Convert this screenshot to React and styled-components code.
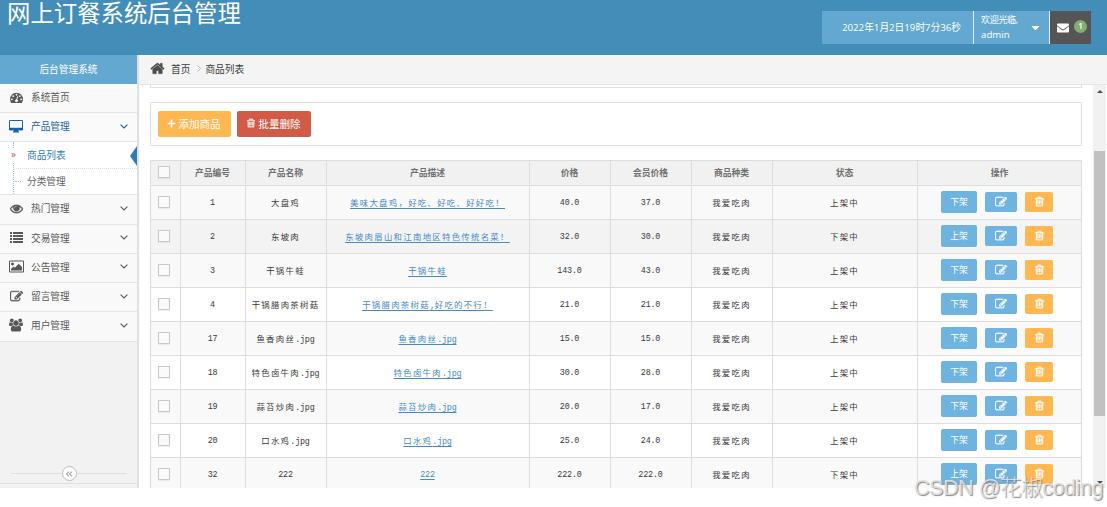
import React, { Fragment } from "react";
import styled, { createGlobalStyle, css } from "styled-components";
import {
  FaAngleDoubleLeft,
  FaCaretDown,
  FaEnvelope,
  FaPlus,
} from "react-icons/fa";

const GlobalStyle = createGlobalStyle`
  * {
    box-sizing: border-box;
  }
  body {
    margin: 0;
    background: #fff;
    color: #393939;
    font-family: "Open Sans", "Noto Sans CJK SC", sans-serif;
    font-size: 9.7px;
    overflow: hidden;
  }
`;

const Page = styled.div`
  position: relative;
  width: 1107px;
  height: 507px;
  overflow: hidden;
`;

const Navbar = styled.header`
  display: flex;
  justify-content: space-between;
  height: 55px;
  padding: 0 16px 0 7px;
  background: #438eb9;
  color: #fff;
`;

const Brand = styled.h1`
  margin: 0;
  font-size: 23.4px;
  font-weight: 400;
  line-height: 26px;
  white-space: nowrap;
`;

const NavTools = styled.div`
  display: flex;
  height: 33px;
  margin-top: 11px;
`;

const Clock = styled.div`
  width: 152px;
  padding-left: 20px;
  background: #62a8d1;
  border-right: 1px solid #e1eef6;
  line-height: 33px;
  white-space: nowrap;
`;

const UserMenu = styled.div`
  display: flex;
  align-items: center;
  justify-content: space-between;
  width: 76px;
  padding: 0 7px 0 7px;
  background: #62a8d1;
  border-right: 1px solid #e1eef6;
`;

const UserInfo = styled.div`
  margin-top: -1px;
  font-size: 9.7px;
  line-height: 15px;
  white-space: nowrap;

  small {
    display: block;
    font-size: 9px;
    letter-spacing: -0.3px;
  }
`;

const Messages = styled.div`
  display: flex;
  align-items: center;
  gap: 5px;
  width: 41px;
  padding-left: 7px;
  background: #555;
`;

const Badge = styled.span`
  width: 13px;
  height: 13px;
  margin-top: -3px;
  border-radius: 50%;
  background: #82af6f;
  font-size: 9px;
  font-weight: 600;
  line-height: 12px;
  text-align: center;
`;

const Main = styled.div`
  display: flex;
  height: 433px;
`;

const Sidebar = styled.aside`
  display: flex;
  flex-direction: column;
  width: 139px;
  background: #f2f2f2;
  border-right: 2px solid #e0e0e0;
`;

const SidebarTitle = styled.div`
  height: 29px;
  background: #62a8d1;
  color: #fff;
  line-height: 29px;
  text-align: center;
`;

const MenuItem = styled.div`
  display: flex;
  align-items: center;
  height: ${(props) => props.$height || 29.25}px;
  padding: 0 9px 2px 8px;
  background: ${(props) => (props.$open ? "#fafafa" : "#f9f9f9")};
  border-bottom: 1px solid #e5e5e5;
  color: ${(props) => (props.$open ? "#1963aa" : "#585858")};
`;

const MenuIcon = styled.span`
  display: flex;
  justify-content: center;
  width: 16px;
  margin-right: 7px;
`;

const MenuLabel = styled.span`
  flex: 1;
`;

const SubMenu = styled.div`
  height: 53.3px;
  padding-left: 13px;
  background: #fff;
  border-bottom: 1px solid #e5e5e5;
`;

const SubList = styled.div`
  border-left: 1px dotted #9dbdd6;
`;

const SubItem = styled.div`
  position: relative;
  display: flex;
  align-items: center;
  height: 26px;
  padding: 0 0 1px 13px;
  color: ${(props) => (props.$active ? "#2b7dbc" : "#616161")};

  & + & {
    border-top: 1px dotted #e0e0e0;
  }

  &::before {
    content: "${(props) => (props.$active ? "»" : "")}";
    position: absolute;
    left: ${(props) => (props.$active ? "-3px" : "1px")};
    top: ${(props) => (props.$active ? "6px" : "12px")};
    width: 6px;
    color: #c86139;
    font-size: 10px;
    line-height: 12px;
    ${(props) =>
      props.$active
        ? "background: #fff; height: 14px;"
        : "height: 1px; border-top: 1px dotted #9dbdd6;"}
  }
`;

const ActiveArrow = styled.span`
  position: absolute;
  right: 0;
  top: 4px;
  border-style: solid;
  border-width: 10px 7px 10px 0;
  border-color: transparent #2b7dbc;
`;

const Collapse = styled.div`
  display: flex;
  align-items: center;
  height: 20px;
  margin-top: auto;
  margin-bottom: 4px;
  padding: 0 10px 0 11px;
  border-bottom: 1px solid #e0e0e0;

  &::before,
  &::after {
    content: "";
    flex: 1;
    height: 1px;
    background: #e0e0e0;
  }
`;

const CollapseButton = styled.span`
  display: flex;
  align-items: center;
  justify-content: center;
  width: 15px;
  height: 15px;
  border: 1px solid #bbb;
  border-radius: 50%;
  background: #fff;
  color: #aaa;
`;

const Content = styled.main`
  flex: 1;
  display: flex;
  flex-direction: column;
  min-width: 0;
`;

const Breadcrumbs = styled.nav`
  display: flex;
  align-items: center;
  height: 30px;
  padding: 0 0 2px 11px;
  background: #f4f4f4;
  border-bottom: 1px solid #e5e5e5;

  & > svg:first-child {
    color: #4c4c4c;
  }
`;

const Crumb = styled.span`
  margin-left: ${(props) => props.$gap}px;
`;

const ScrollArea = styled.div`
  flex: 1;
  display: flex;
  min-height: 0;
`;

const Body = styled.div`
  width: 954px;
  padding: 0 11px;
  overflow: hidden;
`;

const SearchBottom = styled.div`
  height: 3px;
  border: 1px solid #e0e0e0;
  border-top: 0;
`;

const Toolbar = styled.div`
  display: flex;
  gap: 6px;
  height: 44px;
  margin: 14px 0;
  padding: 8px 7px;
  border: 1px solid #e0e0e0;
`;

const ToolButton = styled.button`
  display: flex;
  align-items: center;
  justify-content: center;
  gap: 2px;
  width: ${(props) => props.$width}px;
  height: 26px;
  padding: 0 1px 2px 0;
  border: 0;
  border-radius: 2px;
  background: ${(props) => props.$color};
  color: #fff;
  font-family: inherit;
  font-size: 10.6px;
`;

const Row = styled.div`
  display: grid;
  grid-template-columns: 30px 65px 81px 203px 81px 81px 81px 145px 165px;
  height: 34px;
  background: ${(props) => props.$background};
  border-bottom: 1px solid #ddd;
  border-right: 1px solid #ddd;
  font-family: "Liberation Mono", "Noto Sans CJK SC", monospace;
  font-size: 8.4px;

  ${(props) =>
    props.$head &&
    css`
      height: 26px;
      padding-bottom: 1px;
      border-top: 1px solid #ddd;
      color: #707070;
      font-size: 8.8px;
      font-weight: 700;
    `}
`;

const Cell = styled.div`
  display: flex;
  align-items: center;
  justify-content: center;
  padding-right: 1px;
  border-left: 1px solid #ddd;
  white-space: nowrap;
`;

const CheckCell = styled(Cell)`
  justify-content: flex-start;
  padding: 0 0 1px 7px;
`;

const Checkbox = styled.span`
  width: 12px;
  height: 12px;
  border: 1px solid #c8c8c8;
  background: #fafafa;
  box-shadow: 0 1px 1px rgba(0, 0, 0, 0.05);
`;

const Han = styled.span`
  letter-spacing: 1.3px;
`;

const Latin = styled.span`
  letter-spacing: -0.17px;
`;

const Link = styled.a`
  color: #428bca;
  text-decoration: underline;
  text-decoration-thickness: 1px;
  text-underline-offset: 1.5px;
`;

const Actions = styled(Cell)`
  gap: 8px;
  justify-content: flex-start;
  padding: 0 0 1px 23px;
`;

const ActionButton = styled.button`
  display: flex;
  align-items: center;
  justify-content: center;
  width: ${(props) => props.$width}px;
  height: ${(props) => props.$height || 20}px;
  padding: 0 0 1px;
  border: 0;
  border-radius: 2px;
  background: ${(props) => (props.$warning ? "#ffb752" : "#6fb3e0")};
  color: #fff;
  font-family: "Noto Sans CJK SC", sans-serif;
  font-size: 8.8px;
`;

const Scrollbar = styled.div`
  display: flex;
  flex-direction: column;
  align-items: center;
  justify-content: space-between;
  width: 13px;
  padding: 5px 0 4px;
  background: #f1f1f1;
`;

const Thumb = styled.div`
  width: 11px;
  height: 265px;
  margin: 58px 0 auto;
  background: #c1c1c1;
`;

const ScrollArrow = styled.span`
  border: 3px solid transparent;
  ${(props) =>
    props.$up
      ? "border-top: 0; border-bottom-color: #505050;"
      : "border-bottom: 0; border-top-color: #505050;"}
`;

const Watermark = styled.div`
  position: absolute;
  left: 914px;
  top: 475px;
  color: rgba(225, 225, 225, 0.9);
  font-family: "Liberation Sans", "Noto Sans CJK SC", sans-serif;
  font-size: 21.6px;
  font-weight: 300;
  letter-spacing: -0.5px;
  line-height: 26px;
  text-shadow: 1px 1px 1px #888;
  white-space: nowrap;
`;

const Glyph = ({ width = 11, viewBox = "0 0 1792 1792", weight = 0, d }) => (
  <svg
    width={width}
    height={width}
    viewBox={viewBox}
    fill="currentColor"
    stroke="currentColor"
    strokeWidth={weight}
  >
    <path d={d} />
  </svg>
);

const HomeIcon = () => (
  <Glyph
    width={15}
    weight={40}
    d="M1472 992v480q0 26-19 45t-45 19h-384v-384h-256v384h-384q-26 0-45-19t-19-45v-480q0-1 .5-3t.5-3l575-474 575 474q1 2 1 6zm223-69l-62 74q-8 9-21 11h-3q-13 0-21-7l-692-577-692 577q-12 8-24 7-13-2-21-11l-62-74q-8-10-7-23.5t11-21.5l719-599q32-26 76-26t76 26l244 204v-195q0-14 9-23t23-9h192q14 0 23 9t9 23v408l219 182q10 8 11 21.5t-7 23.5z"
  />
);

const TrashIcon = ({ width }) => (
  <Glyph
    width={width}
    weight={50}
    d="M704 736v576q0 14-9 23t-23 9h-64q-14 0-23-9t-9-23v-576q0-14 9-23t23-9h64q14 0 23 9t9 23zm256 0v576q0 14-9 23t-23 9h-64q-14 0-23-9t-9-23v-576q0-14 9-23t23-9h64q14 0 23 9t9 23zm256 0v576q0 14-9 23t-23 9h-64q-14 0-23-9t-9-23v-576q0-14 9-23t23-9h64q14 0 23 9t9 23zm128 724v-948h-896v948q0 22 7 40.5t14.5 27 10.5 8.5h832q3 0 10.5-8.5t14.5-27 7-40.5zm-672-1076h448l-48-117q-7-9-17-11h-317q-10 2-17 11zm928 32v64q0 14-9 23t-23 9h-96v948q0 83-47 143.5t-113 60.5h-832q-66 0-113-58.5t-47-141.5v-952h-96q-14 0-23-9t-9-23v-64q0-14 9-23t23-9h309l70-167q15-37 54-63t79-26h320q40 0 79 26t54 63l70 167h309q14 0 23 9t9 23z"
  />
);

const EditIcon = ({ width }) => (
  <Glyph
    width={width}
    weight={40}
    d="M888 1184l116-116-152-152-116 116v56h96v96h56zm440-720q-16-16-33 1l-350 350q-17 17-1 33t33-1l350-350q17-17 1-33zm80 594v190q0 119-84.5 203.5t-203.5 84.5h-832q-119 0-203.5-84.5t-84.5-203.5v-832q0-119 84.5-203.5t203.5-84.5h832q63 0 117 25 15 7 18 23 3 17-9 29l-49 49q-14 14-32 8-23-6-45-6h-832q-66 0-113 47t-47 113v832q0 66 47 113t113 47h832q66 0 113-47t47-113v-126q0-13 9-22l64-64q15-15 35-7t20 29zm-96-738l288 288-672 672h-288v-288zm444 132l-92 92-288-288 92-92q28-28 68-28t68 28l152 152q28 28 28 68t-28 68z"
  />
);

const PictureIcon = () => (
  <Glyph
    width={15}
    viewBox="-64 -64 1920 1920"
    d="M576 576q0 80-56 136t-136 56-136-56-56-136 56-136 136-56 136 56 56 136zm1024 384v448h-1408v-192l320-320 160 160 512-512zm96-704h-1600q-13 0-22.5 9.5t-9.5 22.5v1216q0 13 9.5 22.5t22.5 9.5h1600q13 0 22.5-9.5t9.5-22.5v-1216q0-13-9.5-22.5t-22.5-9.5zm160 32v1216q0 66-47 113t-113 47h-1600q-66 0-113-47t-47-113v-1216q0-66 47-113t113-47h1600q66 0 113 47t47 113z"
  />
);

const DashboardIcon = () => (
  <Glyph
    width={13}
    d="M384 1152q0-53-37.5-90.5t-90.5-37.5-90.5 37.5-37.5 90.5 37.5 90.5 90.5 37.5 90.5-37.5 37.5-90.5zm192-448q0-53-37.5-90.5t-90.5-37.5-90.5 37.5-37.5 90.5 37.5 90.5 90.5 37.5 90.5-37.5 37.5-90.5zm428 481l101-382q6-26-7.5-48.5t-38.5-29.5-48 6.5-30 39.5l-101 382q-60 5-107 43.5t-63 98.5q-20 77 20 146t117 89 146-20 89-117q16-60-6-117t-72-91zm660-33q0-53-37.5-90.5t-90.5-37.5-90.5 37.5-37.5 90.5 37.5 90.5 90.5 37.5 90.5-37.5 37.5-90.5zm-640-640q0-53-37.5-90.5t-90.5-37.5-90.5 37.5-37.5 90.5 37.5 90.5 90.5 37.5 90.5-37.5 37.5-90.5zm448 192q0-53-37.5-90.5t-90.5-37.5-90.5 37.5-37.5 90.5 37.5 90.5 90.5 37.5 90.5-37.5 37.5-90.5zm320 448q0 261-141 483-19 29-54 29h-1402q-35 0-54-29-141-221-141-483 0-182 71-348t191-286 286-191 348-71 348 71 286 191 191 286 71 348z"
  />
);

const EyeIcon = () => (
  <Glyph
    width={13}
    weight={50}
    d="M1664 960q-152-236-381-353 61 104 61 225 0 185-131.5 316.5t-316.5 131.5-316.5-131.5-131.5-316.5q0-121 61-225-229 117-381 353 133 205 333.5 326.5t434.5 121.5 434.5-121.5 333.5-326.5zm-720-384q0-20-14-34t-34-14q-125 0-214.5 89.5t-89.5 214.5q0 20 14 34t34 14 34-14 14-34q0-86 61-147t147-61q20 0 34-14t14-34zm848 384q0 34-20 69-140 230-376.5 368.5t-499.5 138.5-499.5-139-376.5-368q-20-35-20-69t20-69q140-229 376.5-368t499.5-139 499.5 139 376.5 368q20 35 20 69z"
  />
);

const GroupIcon = () => (
  <Glyph
    width={14}
    viewBox="64 -64 1920 1920"
    d="M657 896q-162 5-265 128h-134q-82 0-138-40.5t-56-118.5q0-353 124-353 6 0 43.5 21t97.5 42.5 119 21.5q67 0 133-23-5 37-5 66 0 139 81 256zm1071 637q0 120-73 189.5t-194 69.5h-874q-121 0-194-69.5t-73-189.5q0-53 3.5-103.5t14-109 26.5-108.5 43-97.5 62-81 85.5-53.5 111.5-20q10 0 43 21.5t73 48 107 48 135 21.5 135-21.5 107-48 73-48 43-21.5q61 0 111.5 20t85.5 53.5 62 81 43 97.5 26.5 108.5 14 109 3.5 103.5zm-1024-1277q0 106-75 181t-181 75-181-75-75-181 75-181 181-75 181 75 75 181zm704 384q0 159-112.5 271.5t-271.5 112.5-271.5-112.5-112.5-271.5 112.5-271.5 271.5-112.5 271.5 112.5 112.5 271.5zm576 225q0 78-56 118.5t-138 40.5h-134q-103-123-265-128 81-117 81-256 0-29-5-66 66 23 133 23 59 0 119-21.5t97.5-42.5 43.5-21q124 0 124 353zm-128-609q0 106-75 181t-181 75-181-75-75-181 75-181 181-75 181 75 75 181z"
  />
);

const DesktopIcon = () => (
  <svg width="14" height="13" viewBox="0 0 14 13" fill="currentColor">
    <path
      fillRule="evenodd"
      d="M1 0h12a1 1 0 0 1 1 1v8.5a1 1 0 0 1-1 1H9l.5 1h.5v1H4v-1h.5l.5-1H1a1 1 0 0 1-1-1V1a1 1 0 0 1 1-1zM1 1v6.7h12V1z"
    />
  </svg>
);

const ListIcon = () => (
  <svg width="13" height="11" viewBox="0 0 13 11" fill="currentColor">
    <path d="M0 0h2v2H0zM3 0h10v2H3zM0 3h2v2H0zM3 3h10v2H3zM0 6h2v2H0zM3 6h10v2H3zM0 9h2v2H0zM3 9h10v2H3z" />
  </svg>
);

const Chevron = () => (
  <svg width="8" height="5" viewBox="0 0 8 5" fill="none" stroke="currentColor">
    <path d="M.6.6 4 4 7.4.6" strokeWidth="1.1" />
  </svg>
);

const CrumbArrow = styled.svg.attrs({ viewBox: "0 0 4 7" })`
  width: 4px;
  height: 7px;
  margin-left: 7px;
  fill: none;
  stroke: #b2b6bf;
`;

const menu = [
  { label: "热门管理", icon: <EyeIcon /> },
  { label: "交易管理", icon: <ListIcon /> },
  { label: "公告管理", icon: <PictureIcon /> },
  { label: "留言管理", icon: <EditIcon width={13} /> },
  { label: "用户管理", icon: <GroupIcon /> },
];

const columns = [
  "产品编号",
  "产品名称",
  "产品描述",
  "价格",
  "会员价格",
  "商品种类",
  "状态",
  "操作",
];

const goods = [
  { id: "1", name: "大盘鸡", desc: "美味大盘鸡，好吃、好吃、好好吃！", price: "40.0", vip: "37.0", on: true },
  { id: "2", name: "东坡肉", desc: "东坡肉眉山和江南地区特色传统名菜！", price: "32.0", vip: "30.0", on: false, hover: true },
  { id: "3", name: "干锅牛蛙", desc: "干锅牛蛙", price: "143.0", vip: "43.0", on: true },
  { id: "4", name: "干锅腊肉茶树菇", desc: "干锅腊肉茶树菇,好吃的不行！", price: "21.0", vip: "21.0", on: true },
  { id: "17", name: "鱼香肉丝.jpg", desc: "鱼香肉丝.jpg", price: "15.0", vip: "15.0", on: true },
  { id: "18", name: "特色卤牛肉.jpg", desc: "特色卤牛肉.jpg", price: "30.0", vip: "28.0", on: true },
  { id: "19", name: "蒜苔炒肉.jpg", desc: "蒜苔炒肉.jpg", price: "20.0", vip: "17.0", on: true },
  { id: "20", name: "口水鸡.jpg", desc: "口水鸡.jpg", price: "25.0", vip: "24.0", on: true },
  { id: "32", name: "222", desc: "222", price: "222.0", vip: "222.0", on: false },
];

// Chinese characters take exactly two latin columns in the table body
const MonoText = ({ children }) => (
  <span>
    {children.match(/[\x20-\x7e]+|[^\x20-\x7e]+/g).map((run, i) =>
      /^[\x20-\x7e]/.test(run) ? (
        <Latin key={i}>{run}</Latin>
      ) : (
        <Han key={i}>{run}</Han>
      )
    )}
  </span>
);

const rowBackground = (item, index) => {
  if (item.hover) return "#f3f3f3";
  return index % 2 === 0 ? "#f9f9f9" : "#fff";
};

function GoodsTable() {
  return (
    <Fragment>
      <Row $head $background="#f1f1f1">
        <CheckCell>
          <Checkbox />
        </CheckCell>
        {columns.map((title) => (
          <Cell key={title}>{title}</Cell>
        ))}
      </Row>
      {goods.map((item, index) => (
        <Row key={item.id} $background={rowBackground(item, index)}>
          <CheckCell>
            <Checkbox />
          </CheckCell>
          <Cell><MonoText>{item.id}</MonoText></Cell>
          <Cell><MonoText>{item.name}</MonoText></Cell>
          <Cell>
            <Link><MonoText>{item.desc}</MonoText></Link>
          </Cell>
          <Cell><MonoText>{item.price}</MonoText></Cell>
          <Cell><MonoText>{item.vip}</MonoText></Cell>
          <Cell><MonoText>我爱吃肉</MonoText></Cell>
          <Cell><MonoText>{item.on ? "上架中" : "下架中"}</MonoText></Cell>
          <Actions>
            <ActionButton $width={36} $height={22}>
              {item.on ? "下架" : "上架"}
            </ActionButton>
            <ActionButton $width={32}>
              <EditIcon width={12} />
            </ActionButton>
            <ActionButton $width={28} $warning>
              <TrashIcon width={11} />
            </ActionButton>
          </Actions>
        </Row>
      ))}
    </Fragment>
  );
}

function App() {
  return (
    <Page>
      <GlobalStyle />
      <Navbar>
        <Brand>网上订餐系统后台管理</Brand>
        <NavTools>
          <Clock>2022年1月2日19时7分36秒</Clock>
          <UserMenu>
            <UserInfo>
              <small>欢迎光临,</small>
              admin
            </UserInfo>
            <FaCaretDown size={13} />
          </UserMenu>
          <Messages>
            <FaEnvelope size={12} />
            <Badge>1</Badge>
          </Messages>
        </NavTools>
      </Navbar>
      <Main>
        <Sidebar>
          <SidebarTitle>后台管理系统</SidebarTitle>
          <MenuItem $height={29}>
            <MenuIcon><DashboardIcon /></MenuIcon>
            <MenuLabel>系统首页</MenuLabel>
          </MenuItem>
          <MenuItem $height={29} $open>
            <MenuIcon><DesktopIcon /></MenuIcon>
            <MenuLabel>产品管理</MenuLabel>
            <Chevron />
          </MenuItem>
          <SubMenu>
            <SubList>
              <SubItem $active>
                商品列表
                <ActiveArrow />
              </SubItem>
              <SubItem>分类管理</SubItem>
            </SubList>
          </SubMenu>
          {menu.map((item) => (
            <MenuItem key={item.label}>
              <MenuIcon>{item.icon}</MenuIcon>
              <MenuLabel>{item.label}</MenuLabel>
              <Chevron />
            </MenuItem>
          ))}
          <Collapse>
            <CollapseButton>
              <FaAngleDoubleLeft size={8} />
            </CollapseButton>
          </Collapse>
        </Sidebar>
        <Content>
          <Breadcrumbs>
            <HomeIcon />
            <Crumb $gap={6}>首页</Crumb>
            <CrumbArrow>
              <path d="M.5.5l3 3-3 3" />
            </CrumbArrow>
            <Crumb $gap={4}>商品列表</Crumb>
          </Breadcrumbs>
          <ScrollArea>
            <Body>
              <SearchBottom />
              <Toolbar>
                <ToolButton $width={73} $color="#ffb752">
                  <FaPlus size={9} />
                  添加商品
                </ToolButton>
                <ToolButton $width={74} $color="#d15b47">
                  <TrashIcon width={10} />
                  批量删除
                </ToolButton>
              </Toolbar>
              <GoodsTable />
            </Body>
            <Scrollbar>
              <ScrollArrow $up />
              <Thumb />
              <ScrollArrow />
            </Scrollbar>
          </ScrollArea>
        </Content>
      </Main>
      <Watermark>CSDN @花椒coding</Watermark>
    </Page>
  );
}

export default App;
